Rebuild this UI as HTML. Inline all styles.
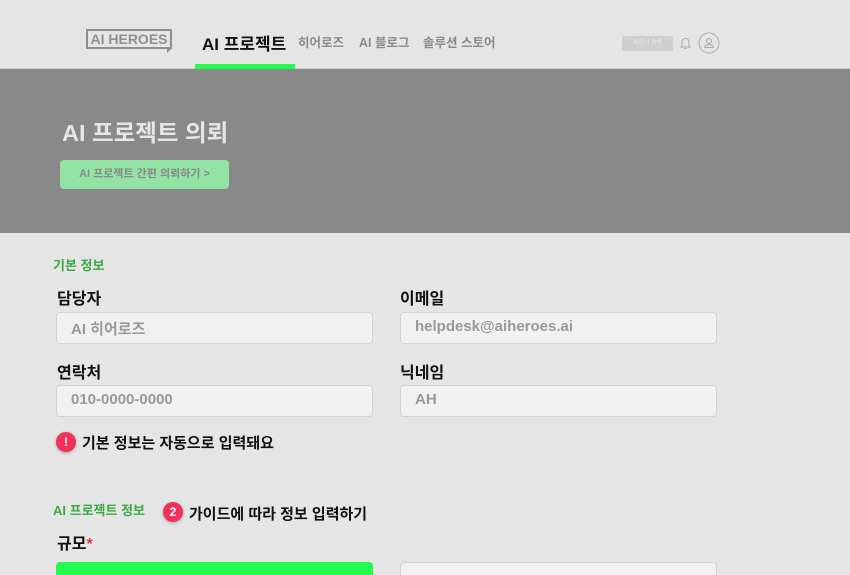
<!DOCTYPE html>
<html><head><meta charset="utf-8"><style>
*{margin:0;padding:0;box-sizing:border-box}
html,body{width:850px;height:575px;overflow:hidden}
body{background:#e5e5e5;font-family:"Liberation Sans","Noto Sans CJK KR",sans-serif;position:relative}
.a{position:absolute;white-space:nowrap}
.inp{position:absolute;width:317px;height:32px;background:#f1f1f1;border:1px solid #d2d2d2;border-radius:4px;font-size:15px;color:#999;font-weight:bold;padding:5px 0 0 14px}
.lbl{position:absolute;font-size:16px;font-weight:bold;color:#111}
.nav{position:absolute;top:32px;font-size:12.5px;font-weight:bold;color:#8a8a8a}
.circ{position:absolute;width:20px;height:20px;border-radius:50%;background:#f0325a;color:#fff;font-size:12px;font-weight:bold;text-align:center;line-height:20px;box-shadow:0 1px 3px rgba(0,0,0,.3)}
</style></head><body>
<div class="a" style="left:0;top:68px;width:850px;height:1px;background:#cfcfcf"></div>
<div class="a" style="left:86px;top:29px;width:86px;height:20px;border:2px solid #8f8f8f;font-size:14px;font-weight:bold;color:#8f8f8f;text-align:center;line-height:16px">AI HEROES</div>
<div class="a" style="left:167px;top:48px;width:0;height:0;border-left:5px solid #8f8f8f;border-bottom:5px solid transparent"></div>
<div class="a" style="left:202px;top:30px;font-size:17px;font-weight:bold;color:#111">AI 프로젝트</div>
<div class="a" style="left:195px;top:64px;width:100px;height:5px;background:#22fc4e"></div>
<div class="nav" style="left:298px">히어로즈</div>
<div class="nav" style="left:359px">AI 블로그</div>
<div class="nav" style="left:423px">솔루션 스토어</div>
<div class="a" style="left:622px;top:36px;width:51px;height:15px;background:#cfcfcf;border-radius:2px;font-size:6px;color:#eee;text-align:center;line-height:15px">파트너 등록</div>
<svg class="a" style="left:679px;top:36px" width="13" height="14" viewBox="0 0 13 14"><path d="M3 10V6a3.5 3.5 0 0 1 7 0v4l1 1H2z M5.5 12.5h2" fill="none" stroke="#aaa" stroke-width="1"/></svg>
<svg class="a" style="left:698px;top:32px" width="22" height="22" viewBox="0 0 22 22"><circle cx="11" cy="11" r="10" fill="none" stroke="#aaa"/><circle cx="11" cy="9" r="2.5" fill="none" stroke="#aaa"/><path d="M6.5 15.5a4.5 3 0 0 1 9 0z" fill="none" stroke="#aaa"/></svg>
<div class="a" style="left:0;top:69px;width:850px;height:164px;background:#898989"></div>
<div class="a" style="left:62px;top:114px;font-size:23.5px;font-weight:bold;color:#e6e6e6">AI 프로젝트 의뢰</div>
<div class="a" style="left:60px;top:160px;width:169px;height:29px;background:#93e3a5;border-radius:4px;font-size:11px;font-weight:bold;color:#888;text-align:center;line-height:29px">AI 프로젝트 간편 의뢰하기 &gt;</div>
<div class="a" style="left:53px;top:255px;font-size:13px;font-weight:bold;color:#3aa845">기본 정보</div>
<div class="lbl" style="left:57px;top:285px">담당자</div>
<div class="lbl" style="left:400px;top:285px">이메일</div>
<div class="inp" style="left:56px;top:312px">AI 히어로즈</div>
<div class="inp" style="left:400px;top:312px">helpdesk@aiheroes.ai</div>
<div class="lbl" style="left:57px;top:359px">연락처</div>
<div class="lbl" style="left:400px;top:359px">닉네임</div>
<div class="inp" style="left:56px;top:385px">010-0000-0000</div>
<div class="inp" style="left:400px;top:385px">AH</div>
<div class="circ" style="left:56px;top:432px">!</div>
<div class="a" style="left:82px;top:432px;font-size:15px;font-weight:bold;color:#111">기본 정보는 자동으로 입력돼요</div>
<div class="a" style="left:53px;top:500px;font-size:13px;font-weight:bold;color:#3aa845">AI 프로젝트 정보</div>
<div class="circ" style="left:163px;top:502px">2</div>
<div class="a" style="left:189px;top:503px;font-size:15px;font-weight:bold;color:#111">가이드에 따라 정보 입력하기</div>
<div class="lbl" style="left:57px;top:530px">규모<span style="color:#e8324a">*</span></div>
<div class="a" style="left:56px;top:562px;width:317px;height:20px;background:#22fc4e;border-radius:4px"></div>
<div class="a" style="left:400px;top:562px;width:317px;height:20px;background:#f1f1f1;border:1px solid #d2d2d2;border-radius:4px"></div>
</body></html>
